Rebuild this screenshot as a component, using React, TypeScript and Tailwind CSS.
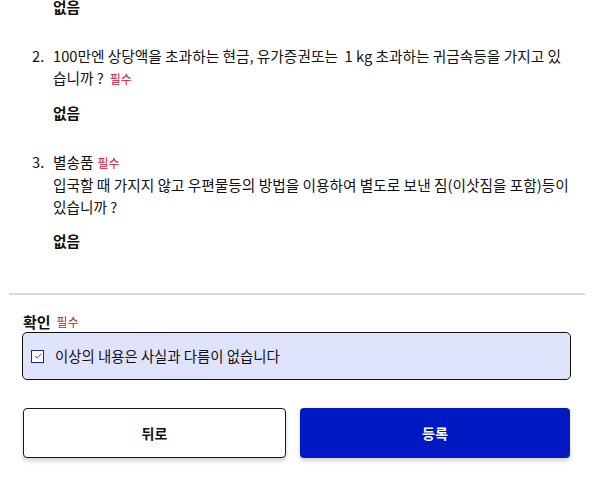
import React from "react";

const items = [
  {
    no: "2.",
    title: null,
    body: "100만엔 상당액을 초과하는 현금, 유가증권또는\u00a0 1 kg 초과하는 귀금속등을 가지고 있습니까 ?",
    answer: "없음",
  },
  {
    no: "3.",
    title: "별송품",
    body: "입국할 때 가지지 않고 우편물등의 방법을 이용하여 별도로 보낸 짐(이삿짐을 포함)등이 있습니까 ?",
    answer: "없음",
  },
];

function Required({ gap = "ml-[5px]" }: { gap?: string }) {
  return <span className={`${gap} text-[12px] text-[#d4103a]`}>필수</span>;
}

export default function App() {
  return (
    <div className="w-full h-[478px] overflow-hidden bg-white text-[14.7px] leading-[22px] text-[#111] font-['Noto_Sans_CJK_KR','Noto_Sans',sans-serif]">
      <div className="px-[22px]">
        <div className="-mt-[4px] pl-[31px] font-bold">없음</div>

        {items.map((item) => (
          <div key={item.no} className="mt-[27px]">
            <div className="flex pl-[10px]">
              <span className="w-[21px] shrink-0">{item.no}</span>
              <div className="flex-1">
                {item.title ? (
                  <>
                    <div>
                      {item.title}
                      <Required gap="ml-[4px]" />
                    </div>
                    <div>{item.body}</div>
                  </>
                ) : (
                  <div>
                    {item.body}
                    <Required gap="ml-[6px]" />
                  </div>
                )}
              </div>
            </div>
            <div className="mt-[12px] pl-[31px] font-bold">{item.answer}</div>
          </div>
        ))}
      </div>

      <div className="mt-[41px] ml-[9px] mr-[8px] h-[2px] bg-[#d9d9d9]" />

      <div className="px-[22px] pt-[16px]">
        <div className="flex h-[21px] items-center pl-[1px]">
          <span className="text-[15px] font-bold">확인</span>
          <Required gap="ml-[6px]" />
        </div>
        <label className="flex h-[48px] items-center gap-[11px] rounded-[5px] border border-[#111] bg-[#dfe3fc] px-[8px] text-[14.4px]">
          <span className="flex h-[13px] w-[13px] items-center justify-center border-[1.5px] border-[#1626b4] bg-white">
            <svg viewBox="0 0 12 12" className="h-[10px] w-[10px]" fill="none" stroke="#1626b4" strokeWidth={1}>
              <path d="M2.5 6.2l2.4 2.4 4.8-5" />
            </svg>
          </span>
          <span>이상의 내용은 사실과 다름이 없습니다</span>
        </label>

        <div className="mt-[28px] grid grid-cols-[263px_1fr] gap-[14px] pl-[1px] pr-[1px]">
          <button className="h-[50px] rounded-[4px] border border-[#1a1a1a] bg-white text-[14px] font-bold shadow-[0_3px_4px_rgba(0,0,0,0.18)]">
            뒤로
          </button>
          <button className="h-[50px] rounded-[4px] bg-[#0019c2] text-[14px] font-bold text-white shadow-[0_3px_4px_rgba(0,0,0,0.18)]">
            등록
          </button>
        </div>
      </div>
    </div>
  );
}
